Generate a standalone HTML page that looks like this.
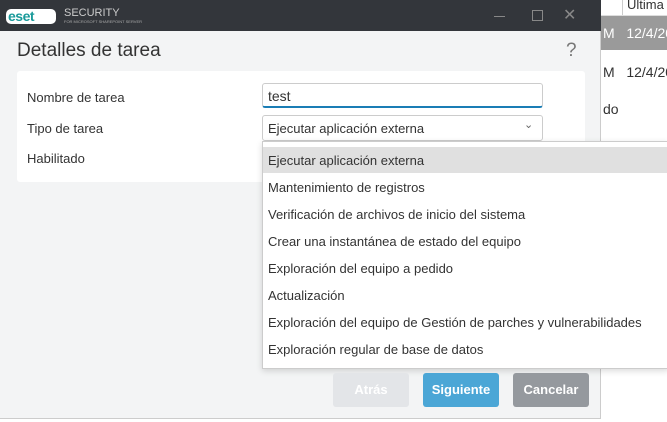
<!DOCTYPE html><html><head><style>
body{margin:0;width:667px;height:422px;overflow:hidden;background:#fff;font-family:"Liberation Sans",sans-serif;position:relative;font-size:13px;color:#333}
.a{position:absolute;white-space:nowrap}
</style></head><body>
<div class="a" style="left:601px;top:0;width:66px;height:15px;background:#fff;border-bottom:1px solid #ddd"></div>
<div class="a" style="left:622px;top:0;width:1px;height:15px;background:#ccc"></div>
<div class="a" style="left:627px;top:-3px;font-size:13px;color:#333">Última</div>
<div class="a" style="left:601px;top:16px;width:66px;height:34px;background:#9a9a9a"></div>
<div class="a" style="left:603px;top:25px;color:#fff;font-size:14px">M&nbsp;&nbsp;&nbsp;12/4/20</div>
<div class="a" style="left:603px;top:64px;color:#333;font-size:14px">M&nbsp;&nbsp;&nbsp;12/4/20</div>
<div class="a" style="left:603px;top:101px;color:#333;font-size:14px">do</div>
<div class="a" style="left:0;top:0;width:601px;height:31px;background:#33363b"></div>
<div class="a" style="left:6px;top:9px;width:50px;height:15px;background:#fff;border-radius:5px"></div>
<div class="a" style="left:8px;top:8px;font:bold 14px 'Liberation Sans';color:#1a9a9a;letter-spacing:-0.5px">eset</div>
<div class="a" style="left:64px;top:7px;color:#ccc;font-size:11px">SECURITY</div>
<div class="a" style="left:64px;top:19px;color:#aaa;font-size:4px">FOR MICROSOFT SHAREPOINT SERVER</div>
<div class="a" style="left:494px;top:16px;width:11px;height:1px;background:#888"></div>
<div class="a" style="left:532px;top:10px;width:9px;height:9px;border:1px solid #888"></div>
<div class="a" style="left:563px;top:5px;color:#888;font-size:16px">✕</div>
<div class="a" style="left:0;top:31px;width:600px;height:387px;background:#f3f4f5;border-right:1px solid #ccc;border-bottom:1px solid #ccc"></div>
<div class="a" style="left:17px;top:40px;font-size:19px;color:#333">Detalles de tarea</div>
<div class="a" style="left:566px;top:40px;font-size:19px;color:#777">?</div>
<div class="a" style="left:17px;top:71px;width:568px;height:111px;background:#fff;border-radius:3px"></div>
<div class="a" style="left:27px;top:90px">Nombre de tarea</div>
<div class="a" style="left:27px;top:121px">Tipo de tarea</div>
<div class="a" style="left:27px;top:151px">Habilitado</div>
<div class="a" style="left:262px;top:83px;width:279px;height:22px;border:1px solid #ccc;border-bottom:2px solid #1a7db5;border-radius:3px;background:#fff"></div>
<div class="a" style="left:268px;top:88px;font-size:14px">test</div>
<div class="a" style="left:262px;top:115px;width:279px;height:24px;border:1px solid #ccc;border-radius:3px;background:#fff"></div>
<div class="a" style="left:268px;top:121px">Ejecutar aplicación externa</div>
<div class="a" style="left:524px;top:118px;color:#666;font-size:11px">⌄</div>
<div class="a" style="left:262px;top:141px;width:405px;height:226px;background:#fff;border:1px solid #ccc;box-shadow:0 2px 6px rgba(0,0,0,.15)"></div>
<div class="a" style="left:263px;top:147px;width:404px;height:26px;background:#e0e0e0"></div>
<div class="a" style="left:268px;top:154px;line-height:14px">
<div style="height:27px">Ejecutar aplicación externa</div>
<div style="height:27px">Mantenimiento de registros</div>
<div style="height:27px">Verificación de archivos de inicio del sistema</div>
<div style="height:27px">Crear una instantánea de estado del equipo</div>
<div style="height:27px">Exploración del equipo a pedido</div>
<div style="height:27px">Actualización</div>
<div style="height:27px">Exploración del equipo de Gestión de parches y vulnerabilidades</div>
<div style="height:27px">Exploración regular de base de datos</div>
</div>
<div class="a" style="left:333px;top:373px;width:76px;height:34px;background:#e3e5e8;border-radius:3px;color:#fff;font-weight:bold;text-align:center;line-height:34px">Atrás</div>
<div class="a" style="left:423px;top:373px;width:76px;height:34px;background:#4ba6d6;border-radius:3px;color:#fff;font-weight:bold;text-align:center;line-height:34px">Siguiente</div>
<div class="a" style="left:513px;top:373px;width:76px;height:34px;background:#95999e;border-radius:3px;color:#fff;font-weight:bold;text-align:center;line-height:34px">Cancelar</div>
</body></html>
